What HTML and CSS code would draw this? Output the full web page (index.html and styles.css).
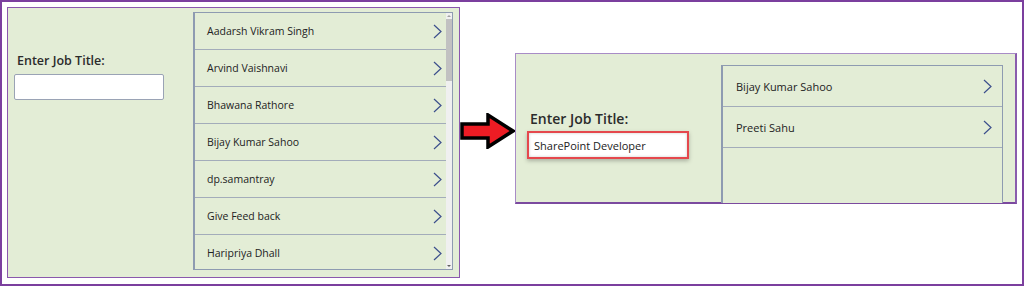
FILE: index.html
```html
<!DOCTYPE html>
<html lang="en">
<head>
    <meta charset="UTF-8">
    <meta name="viewport" content="width=device-width, initial-scale=1.0">
    <title>Search Gallery by Job Title</title>
    <link rel="stylesheet" href="styles.css">
</head>
<body>

    <div class="frame">

        <!-- Before: full gallery -->
        <div class="panel panel-before">
            <div class="form">
                <label class="form-label" for="title-before">Enter Job Title:</label>
                <input class="title-input" id="title-before" type="text">
            </div>
            <div class="gallery">
                <ul class="gallery-items">
                    <li class="gallery-row"><span>Aadarsh Vikram Singh</span><svg class="chevron" viewBox="0 0 9 15"><polyline points="1,1 8,7.5 1,14"/></svg></li>
                    <li class="gallery-row"><span>Arvind Vaishnavi</span><svg class="chevron" viewBox="0 0 9 15"><polyline points="1,1 8,7.5 1,14"/></svg></li>
                    <li class="gallery-row"><span>Bhawana Rathore</span><svg class="chevron" viewBox="0 0 9 15"><polyline points="1,1 8,7.5 1,14"/></svg></li>
                    <li class="gallery-row"><span>Bijay Kumar Sahoo</span><svg class="chevron" viewBox="0 0 9 15"><polyline points="1,1 8,7.5 1,14"/></svg></li>
                    <li class="gallery-row"><span>dp.samantray</span><svg class="chevron" viewBox="0 0 9 15"><polyline points="1,1 8,7.5 1,14"/></svg></li>
                    <li class="gallery-row"><span>Give Feed back</span><svg class="chevron" viewBox="0 0 9 15"><polyline points="1,1 8,7.5 1,14"/></svg></li>
                    <li class="gallery-row"><span>Haripriya Dhall</span><svg class="chevron" viewBox="0 0 9 15"><polyline points="1,1 8,7.5 1,14"/></svg></li>
                </ul>
                <div class="scrollbar">
                    <span class="scroll-up"></span>
                    <span class="scroll-thumb"></span>
                    <span class="scroll-track"></span>
                    <span class="scroll-down"></span>
                </div>
            </div>
        </div>

        <!-- Arrow between the two states -->
        <div class="arrow">
            <svg viewBox="0 0 56 36" width="56" height="36">
                <polygon points="2,11 28,11 28,2 53,18 28,34 28,25 2,25" />
            </svg>
        </div>

        <!-- After: filtered gallery -->
        <div class="panel panel-after">
            <div class="form">
                <label class="form-label" for="title-after">Enter Job Title:</label>
                <input class="title-input" id="title-after" type="text" value="SharePoint Developer">
            </div>
            <div class="gallery">
                <ul class="gallery-items">
                    <li class="gallery-row"><span>Bijay Kumar Sahoo</span><svg class="chevron" viewBox="0 0 9 15"><polyline points="1,1 8,7.5 1,14"/></svg></li>
                    <li class="gallery-row"><span>Preeti Sahu</span><svg class="chevron" viewBox="0 0 9 15"><polyline points="1,1 8,7.5 1,14"/></svg></li>
                </ul>
            </div>
        </div>

    </div>

</body>
</html>
```

FILE: styles.css
```css
body {
    margin: 0;
    padding: 0;
    background-color: #fff;
    font-family: "Open Sans", "Noto Sans", Arial, sans-serif;
    color: #333;
}

/* Outer purple frame round the whole picture */
.frame {
    box-sizing: border-box;
    width: 1024px;
    height: 286px;
    border: 2px solid #7b3f9e;
    padding: 5px;
    display: flex;
    align-items: flex-start;
}

/* Green app screens */
.panel {
    box-sizing: border-box;
    background-color: #e3edd6;
    display: flex;
}

.panel-before {
    width: 453px;
    height: 271px;
    border: 1px solid #8a58ad;
    padding: 4px 0 0 6px;
}

.panel-after {
    width: 502px;
    height: 151px;
    margin-top: 46px;
    border: 1px solid #a88cc6;
    border-right: 2px solid #8a5cae;
    border-bottom: 2px solid #7b4a9f;
    padding: 11px 0 0 11px;
}

/* Label + text box */
.form {
    display: flex;
    flex-direction: column;
}

.panel-before .form {
    width: 179px;
    padding-top: 40px;
}

.panel-after .form {
    width: 194px;
    padding-top: 44px;
}

.form-label {
    font-weight: 600;
    color: #2b2b2b;
    padding-left: 3px;
}

.panel-before .form-label {
    font-size: 12.5px;
    line-height: 18px;
    margin-bottom: 4px;
}

.panel-after .form-label {
    font-size: 14px;
    line-height: 20px;
    margin-bottom: 2px;
}

.title-input {
    box-sizing: border-box;
    margin: 0;
    font-family: inherit;
    color: #222;
    background: #fff;
    outline: none;
}

.panel-before .title-input {
    width: 150px;
    height: 26px;
    border: 1px solid #9aa3b5;
    border-radius: 2px;
}

.panel-after .title-input {
    width: 162px;
    height: 28px;
    border: 2px solid #e5484d;
    font-size: 11px;
    font-weight: 500;
    padding: 0 5px;
    box-shadow: 0 2px 4px rgba(0, 0, 0, 0.25), inset 0 0 3px rgba(0, 0, 0, 0.2);
}

/* Gallery list */
.gallery {
    box-sizing: border-box;
    display: flex;
    border: 1px solid #8e9bb1;
    border-left-width: 2px;
    background-color: #e3edd6;
}

.panel-before .gallery {
    width: 260px;
    height: 258px;
}

.panel-after .gallery {
    width: 282px;
    height: 138px;
    border-bottom: none;
}

.gallery-items {
    list-style: none;
    margin: 0;
    padding: 0;
    flex-grow: 1;
    overflow: hidden;
}

.gallery-row {
    display: flex;
    align-items: center;
    justify-content: space-between;
    border-bottom: 1px solid #a3acba;
    color: #222;
    font-weight: 500;
}

.panel-before .gallery-row {
    height: 36px;
    padding: 0 4px 0 12px;
    font-size: 10.5px;
}

.panel-after .gallery-row {
    height: 40px;
    padding: 0 10px 0 13px;
    font-size: 11px;
}

.chevron {
    width: 9px;
    height: 15px;
    fill: none;
    stroke: #3c4f8c;
    stroke-width: 1.2;
}

/* Fake scrollbar on the long list */
.scrollbar {
    width: 6px;
    display: flex;
    flex-direction: column;
    background-color: #f0f0f0;
}

.scroll-up,
.scroll-down {
    height: 6px;
    position: relative;
}

.scroll-up:after,
.scroll-down:after {
    content: "";
    position: absolute;
    left: 1px;
    border-left: 2px solid transparent;
    border-right: 2px solid transparent;
}

.scroll-up:after {
    top: 2px;
    border-bottom: 2px solid #a0a0a0;
}

.scroll-down:after {
    top: 2px;
    border-top: 2px solid #606060;
}

.scroll-thumb {
    height: 62px;
    background-color: #c1c1c1;
}

.scroll-track {
    flex-grow: 1;
}

/* Red arrow */
.arrow {
    width: 55px;
    margin-top: 106px;
}

.arrow svg {
    display: block;
}

.arrow polygon {
    fill: #ed1c24;
    stroke: #000;
    stroke-width: 3.5;
    stroke-linejoin: miter;
}
```
